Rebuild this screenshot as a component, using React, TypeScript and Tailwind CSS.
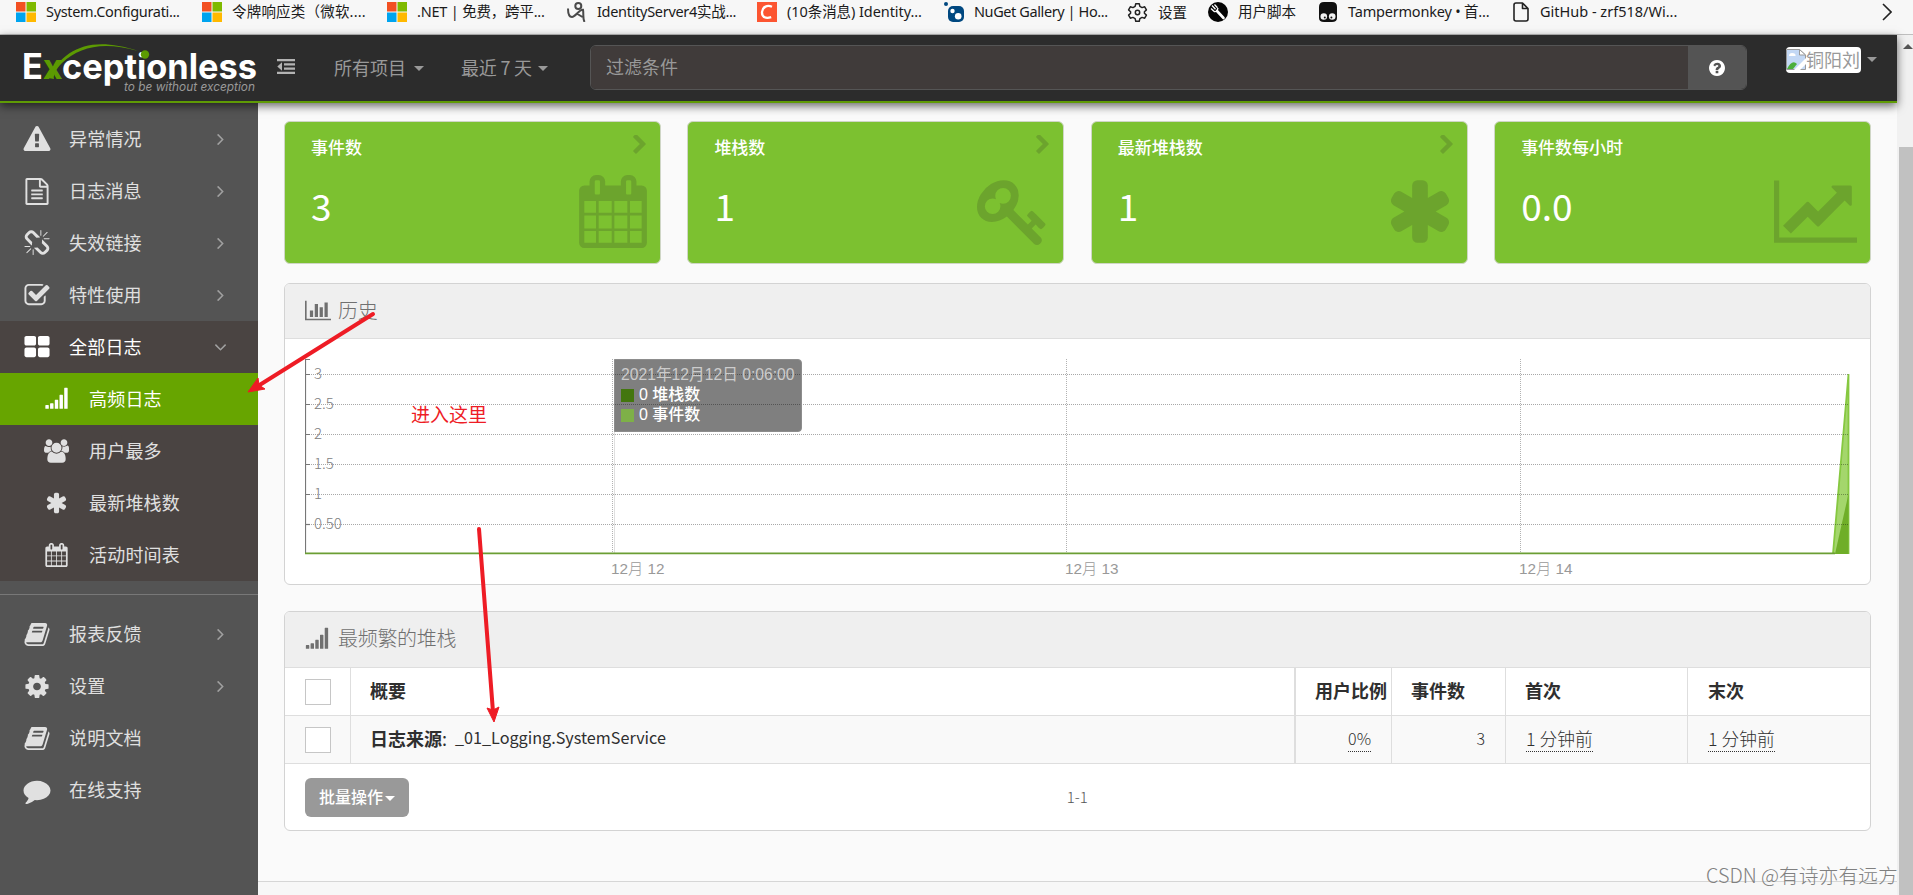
import React from "react";

type IconDef = { box: string; d: string };

const ICONS = {
  warning: {
    box: "0 0 1792 1792",
    d: "M1024 1375v-190q0-14-9.5-23.5t-22.5-9.5h-192q-13 0-22.5 9.5t-9.5 23.5v190q0 14 9.5 23.5t22.5 9.5h192q13 0 22.5-9.5t9.5-23.5zm-2-374l18-459q0-12-10-19-13-11-24-11h-220q-11 0-24 11-10 7-10 21l17 457q0 10 10 16.5t24 6.5h185q14 0 23.5-6.5t10.5-16.5zm-14-934l768 1408q35 63-2 126-17 29-46.5 46t-63.5 17h-1536q-34 0-63.5-17t-46.5-46q-37-63-2-126l768-1408q17-31 47-49t65-18 65 18 47 49z",
  },
  fileText: {
    box: "0 0 1792 1792",
    d: "M1596 380q28 28 48 76t20 88v1152q0 40-28 68t-68 28h-1344q-40 0-68-28t-28-68v-1600q0-40 28-68t68-28h896q40 0 88 20t76 48zm-444-244v376h376q-10-29-22-41l-313-313q-12-12-41-22zm384 1528v-1024h-416q-40 0-68-28t-28-68v-416h-768v1536h1280zm-1024-864q0-14 9-23t23-9h704q14 0 23 9t9 23v64q0 14-9 23t-23 9h-704q-14 0-23-9t-9-23v-64zm736 224q14 0 23 9t9 23v64q0 14-9 23t-23 9h-704q-14 0-23-9t-9-23v-64q0-14 9-23t23-9h704zm0 256q14 0 23 9t9 23v64q0 14-9 23t-23 9h-704q-14 0-23-9t-9-23v-64q0-14 9-23t23-9h704z",
  },
  unlink: {
    box: "0 0 1792 1792",
    d: "M503 1271l-256 256q-10 9-23 9-12 0-23-9-9-10-9-23t9-23l256-256q10-9 23-9t23 9q9 10 9 23t-9 23zm169 41v320q0 14-9 23t-23 9-23-9-9-23v-320q0-14 9-23t23-9 23 9 9 23zm-224-224q0 14-9 23t-23 9h-320q-14 0-23-9t-9-23 9-23 23-9h320q14 0 23 9t9 23zm1264 128q0 120-85 203l-147 146q-83 83-203 83-121 0-204-85l-334-335q-21-21-42-56l239-18 273 274q28 28 68 28.5t68-27.5l147-146q28-28 28-67 0-40-28-68l-274-275 18-239q35 21 56 42l336 336q84 86 84 204zm-617-724l-239 18-273-274q-28-28-68-28-39 0-68 27l-147 146q-28 28-28 67 0 40 28 68l274 274-18 240q-35-21-56-42l-336-336q-84-86-84-204 0-120 85-203l147-146q83-83 203-83 121 0 204 85l334 335q21 21 42 56zm633 84q0 14-9 23t-23 9h-320q-14 0-23-9t-9-23 9-23 23-9h320q14 0 23 9t9 23zm-544-544v320q0 14-9 23t-23 9-23-9-9-23v-320q0-14 9-23t23-9 23 9 9 23zm407 151l-256 256q-11 9-23 9t-23-9q-9-10-9-23t9-23l256-256q10-9 23-9t23 9q9 10 9 23t-9 23z",
  },
  checkSquare: {
    box: "0 0 1792 1792",
    d: "M1472 930v318q0 119-84.5 203.5t-203.5 84.5h-832q-119 0-203.5-84.5t-84.5-203.5v-832q0-119 84.5-203.5t203.5-84.5h832q63 0 117 25 15 7 18 23 3 17-9 29l-49 49q-10 10-23 10-3 0-9-2-23-6-45-6h-832q-66 0-113 47t-47 113v832q0 66 47 113t113 47h832q66 0 113-47t47-113v-254q0-13 9-22l64-64q10-10 23-10 6 0 12 3 20 8 20 29zm231-489l-814 814q-24 24-57 24t-57-24l-430-430q-24-24-24-57t24-57l110-110q24-24 57-24t57 24l263 263 647-647q24-24 57-24t57 24l110 110q24 24 24 57t-24 57z",
  },
  thLarge: {
    box: "0 0 1792 1792",
    d: "M832 1024v384q0 52-38 90t-90 38h-512q-52 0-90-38t-38-90v-384q0-52 38-90t90-38h512q52 0 90 38t38 90zm0-768v384q0 52-38 90t-90 38h-512q-52 0-90-38t-38-90v-384q0-52 38-90t90-38h512q52 0 90 38t38 90zm896 768v384q0 52-38 90t-90 38h-512q-52 0-90-38t-38-90v-384q0-52 38-90t90-38h512q52 0 90 38t38 90zm0-768v384q0 52-38 90t-90 38h-512q-52 0-90-38t-38-90v-384q0-52 38-90t90-38h512q52 0 90 38t38 90z",
  },
  signal: {
    box: "0 0 1792 1792",
    d: "M64 1376q0-32 32-32h192q32 0 32 32v224q0 32-32 32h-192q-32 0-32-32zM416 1248q0-32 32-32h192q32 0 32 32v352q0 32-32 32h-192q-32 0-32-32zM768 992q0-32 32-32h192q32 0 32 32v608q0 32-32 32h-192q-32 0-32-32zM1120 608q0-32 32-32h192q32 0 32 32v992q0 32-32 32h-192q-32 0-32-32zM1472 96q0-32 32-32h192q32 0 32 32v1504q0 32-32 32h-192q-32 0-32-32z",
  },
  users: {
    box: "64 0 1920 1792",
    d: "M657 896q-162 5-265 128h-134q-82 0-138-40.5t-56-118.5q0-353 124-353 6 0 43.5 21t97.5 42.5 119 21.5q67 0 133-23-5 37-5 66 0 159 80 287zm1071 637q0 120-73 189.5t-194 69.5h-874q-121 0-194-69.5t-73-189.5q0-53 3.5-103.5t14-109 26.5-108.5 43-97.5 62-81 85.5-53.5 111.5-20q10 0 43 21.5t73 48 107 48 135 21.5 135-21.5 107-48 73-48 43-21.5q61 0 111.5 20t85.5 53.5 62 81 43 97.5 26.5 108.5 14 109 3.5 103.5zm-1024-1277q0 106-75 181t-181 75-181-75-75-181 75-181 181-75 181 75 75 181zm704 384q0 159-112.5 271.5t-271.5 112.5-271.5-112.5-112.5-271.5 112.5-271.5 271.5-112.5 271.5 112.5 112.5 271.5zm576 225q0 78-56 118.5t-138 40.5h-134q-103-123-265-128 93-134 93-293 0-29-5-66 66 23 133 23 59 0 119-21.5t97.5-42.5 43.5-21q124 0 124 353zm-128-609q0 106-75 181t-181 75-181-75-75-181 75-181 181-75 181 75 75 181z",
  },
  asterisk: {
    box: "64 0 1664 1792",
    d: "M1546 1050q46 26 59.5 77.5t-12.5 97.5l-64 110q-26 46-77.5 59.5t-97.5-12.5l-266-153v307q0 52-38 90t-90 38h-128q-52 0-90-38t-38-90v-307l-266 153q-46 26-97.5 12.5t-77.5-59.5l-64-110q-26-46-12.5-97.5t59.5-77.5l266-154-266-154q-46-26-59.5-77.5t12.5-97.5l64-110q26-46 77.5-59.5t97.5 12.5l266 153v-307q0-52 38-90t90-38h128q52 0 90 38t38 90v307l266-153q46-26 97.5-12.5t77.5 59.5l64 110q26 46 12.5 97.5t-59.5 77.5l-266 154z",
  },
  calendar: {
    box: "64 0 1664 1792",
    d: "M192 1664h288v-288h-288v288zm352 0h320v-288h-320v288zm-352-352h288v-320h-288v320zm352 0h320v-320h-320v320zm-352-384h288v-288h-288v288zm736 736h320v-288h-320v288zm-384-736h320v-288h-320v288zm768 736h288v-288h-288v288zm-384-352h320v-320h-320v320zm-352-864v-288q0-13-9.5-22.5t-22.5-9.5h-64q-13 0-22.5 9.5t-9.5 22.5v288q0 13 9.5 22.5t22.5 9.5h64q13 0 22.5-9.5t9.5-22.5zm736 864h288v-320h-288v320zm-384-384h320v-288h-320v288zm384 0h288v-288h-288v288zm32-480v-288q0-13-9.5-22.5t-22.5-9.5h-64q-13 0-22.5 9.5t-9.5 22.5v288q0 13 9.5 22.5t22.5 9.5h64q13 0 22.5-9.5t9.5-22.5zm384-64v1280q0 52-38 90t-90 38h-1408q-52 0-90-38t-38-90v-1280q0-52 38-90t90-38h128v-96q0-66 47-113t113-47h64q66 0 113 47t47 113v96h384v-96q0-66 47-113t113-47h64q66 0 113 47t47 113v96h128q52 0 90 38t38 90z",
  },
  book: {
    box: "0 0 1792 1792",
    d: "M1703 478q40 57 18 129l-275 906q-19 64-76.5 107.5t-122.5 43.5h-923q-77 0-148.5-53.5t-99.5-131.5q-24-67-2-127 0-4 3-27t4-37q1-8-3-21.5t-3-19.5q2-11 8-21t16.5-23.5 16.5-23.5q23-38 45-91.5t30-91.5q3-10 .5-30t-.5-28q3-11 17-28t17-23q21-36 42-92t25-90q1-9-2.5-32t.5-28q4-13 22-30.5t22-22.5q19-26 42.5-84.5t27.5-96.5q1-8-3-25.5t-2-26.5q2-8 9-18t18-23 17-21q8-12 16.5-30.5t15-35 16-36 19.5-32 26.5-23.5 36-11.5 47.5 5.5l-1 3q38-9 51-9h761q74 0 114 56t18 130l-274 906q-36 119-71.5 153.5t-128.5 34.5h-869q-27 0-38 15-11 16-1 43 24 70 144 70h923q29 0 56-15.5t35-41.5l300-987q7-22 5-57 38 15 59 43zm-1064 2q-4 13 2 22.5t20 9.5h608q13 0 25.5-9.5t16.5-22.5l21-64q4-13-2-22.5t-20-9.5h-608q-13 0-25.5 9.5t-16.5 22.5zm-83 256q-4 13 2 22.5t20 9.5h608q13 0 25.5-9.5t16.5-22.5l21-64q4-13-2-22.5t-20-9.5h-608q-13 0-25.5 9.5t-16.5 22.5z",
  },
  cog: {
    box: "0 0 1792 1792",
    d: "M1152 896q0-106-75-181t-181-75-181 75-75 181 75 181 181 75 181-75 75-181zm512-109v222q0 12-8 23t-20 13l-185 28q-19 54-39 91 35 50 107 138 10 12 10 25t-9 23q-27 37-99 108t-94 71q-12 0-26-9l-138-108q-44 23-91 38-16 136-29 186-7 28-36 28h-222q-14 0-24.5-8.5t-11.5-21.5l-28-184q-49-16-90-37l-141 107q-10 9-25 9-14 0-25-11-126-114-165-168-7-10-7-23 0-12 8-23 15-21 51-66.5t54-70.5q-27-50-41-99l-183-27q-13-2-21-12.5t-8-23.5v-222q0-12 8-23t19-13l186-28q14-46 39-92-40-57-107-138-10-12-10-24 0-10 9-23 26-36 98.5-107.5t94.5-71.5q13 0 26 10l138 107q44-23 91-38 16-136 29-186 7-28 36-28h222q14 0 24.5 8.5t11.5 21.5l28 184q49 16 90 37l142-107q9-9 24-9 13 0 25 10 129 119 165 170 7 8 7 22 0 12-8 23-15 21-51 66.5t-54 70.5q26 50 41 98l183 28q13 2 21 12.5t8 23.5z",
  },
  comment: {
    box: "0 0 1792 1792",
    d: "M1792 896q0 174-120 321.5t-326 233-450 85.5q-70 0-145-8-198 175-460 242-49 14-114 22-17 2-30.5-9t-17.5-29v-1q-3-4-.5-12t2-10 4.5-9.5l6-9 7-8.5 8-9q7-8 31-34.5t34.5-38 31-39.5 32.5-51 27-59 26-76q-157-89-247.5-220t-90.5-281q0-130 71-248.5t191-204.5 286-136.5 348-50.5q244 0 450 85.5t326 233 120 321.5z",
  },
  barChart: {
    box: "0 0 2048 1792",
    d: "M640 896v512h-256v-512h256zm384-512v1024h-256v-1024h256zm1024 1152v128h-2048v-1536h128v1408h1920zm-640-896v768h-256v-768h256zm384-384v1152h-256v-1152h256z",
  },
  lineChart: {
    box: "0 0 2048 1792",
    d: "M2048 1536v128h-2048v-1536h128v1408h1920zm-128-1248v435q0 21-19.5 29.5t-35.5-7.5l-121-121-633 633q-10 10-23 10t-23-10l-233-233-416 416-192-192 585-585q10-10 23-10t23 10l233 233 464-464-121-121q-16-16-7.5-35.5t29.5-19.5h435q14 0 23 9t9 23z",
  },
  key: {
    box: "0 0 1792 1792",
    d: "M832 512q0-80-56-136t-136-56-136 56-56 136q0 42 19 83-41-19-83-19-80 0-136 56t-56 136 56 136 136 56 136-56 56-136q0-42-19-83 41 19 83 19 80 0 136-56t56-136zm851 704q0 17-49 66t-66 49q-9 0-28.5-16t-36.5-33-38.5-40-24.5-26l-96 96 220 220q28 28 28 68 0 42-39 81t-81 39q-40 0-68-28l-671-671q-176 131-365 131-163 0-265.5-102.5t-102.5-265.5q0-160 95-313t248-248 313-95q163 0 265.5 102.5t102.5 265.5q0 189-131 365l355 355 96-96q-3-3-26-24.5t-40-38.5-33-36.5-16-28.5q0-17 49-66t66-49q13 0 23 10 6 6 46 44.5t82 79.5 86.5 86 73 78 28.5 41z",
  },
  chevronRight: {
    box: "346 100 1036 1556",
    d: "M1363 877l-742 742q-19 19-45 19t-45-19l-166-166q-19-19-19-45t19-45l531-531-531-531q-19-19-19-45t19-45l166-166q19-19 45-19t45 19l742 742q19 19 19 45t-19 45z",
  },
  angleRight: {
    box: "588 460 600 1000",
    d: "M1171 960q0 13-10 23l-466 466q-10 10-23 10t-23-10l-50-50q-10-10-10-23t10-23l393-393-393-393q-10-10-10-23t10-23l50-50q10-10 23-10t23 10l466 466q10 10 10 23z",
  },
  question: {
    box: "128 128 1536 1536",
    d: "M1024 1376v-192q0-14-9-23t-23-9h-192q-14 0-23 9t-9 23v192q0 14 9 23t23 9h192q14 0 23-9t9-23zm256-672q0-88-55.5-163t-138.5-116-170-41q-243 0-371 213-15 24 8 42l132 100q7 6 19 6 16 0 25-12 53-68 86-92 34-24 86-24 48 0 85.5 26t37.5 59q0 38-20 61t-68 45q-63 28-115.5 86.5t-52.5 125.5v36q0 14 9 23t23 9h192q14 0 23-9t9-23q0-19 21.5-49.5t54.5-49.5q32-18 49-28.5t46-35 44.5-48 28-60.5 12.5-81zm384 192q0 209-103 385.5t-279.5 279.5-385.5 103-385.5-103-279.5-279.5-103-385.5 103-385.5 279.5-279.5 385.5-103 385.5 103 279.5 279.5 103 385.5z",
  },
} satisfies Record<string, IconDef>;

type IconName = keyof typeof ICONS;

function Icon({ name, className }: { name: IconName; className: string }) {
  return (
    <svg viewBox={ICONS[name].box} className={`shrink-0 ${className}`} fill="currentColor" aria-hidden="true">
      <path d={ICONS[name].d} />
    </svg>
  );
}

function Caret({ className = "" }: { className?: string }) {
  return (
    <span
      className={`inline-block shrink-0 border-x-[5px] border-t-[5px] border-x-transparent border-t-current ${className}`}
    />
  );
}

/* ---------- bookmarks bar ---------- */

function Microsoft() {
  return (
    <svg viewBox="0 0 20 20" className="size-5">
      <path fill="#f25022" d="M0 0h9.5v9.5H0z" />
      <path fill="#7fba00" d="M10.5 0H20v9.5h-9.5z" />
      <path fill="#00a4ef" d="M0 10.5h9.5V20H0z" />
      <path fill="#ffb900" d="M10.5 10.5H20V20h-9.5z" />
    </svg>
  );
}

function Figure() {
  return (
    <svg viewBox="0 0 20 20" className="size-5" fill="none" stroke="#4a4a4a" strokeWidth="2">
      <circle cx="11.3" cy="4" r="3" />
      <path d="M1 6.5c0 5 1.500 8.500 4 8.500 3.500 0 7-7.500 11-7.200.8 4-.5 8 1.500 12.200M10.500 12l5 3" />
    </svg>
  );
}

function Csdn() {
  return (
    <span className="flex size-5 items-center justify-center bg-[#fc5531]">
      <svg viewBox="0 0 20 20" className="size-5" fill="none" stroke="#fff" strokeWidth="2.300">
        <path d="M15 4.800C10.500 2.800 5.500 4.500 5 10c-.3 5.500 4 7 9.200 5.200" />
      </svg>
    </span>
  );
}

function NuGet() {
  return (
    <svg viewBox="0 0 20 20" className="size-5">
      <circle cx="2" cy="2" r="2" fill="#004880" />
      <rect x="4" y="4" width="16" height="16" rx="5" fill="#004880" />
      <circle cx="8.500" cy="9" r="2.200" fill="#fff" />
      <circle cx="14.200" cy="14.200" r="3.300" fill="#fff" />
    </svg>
  );
}

function Gear() {
  return (
    <svg viewBox="0 0 24 24" className="size-[21px]" fill="none" stroke="#222" strokeWidth="1.700" strokeLinejoin="round">
      <path d="M10 2h4l.7 3 2.500 1.400 3-.9 2 3.500-2.300 2.100v1.800l2.300 2.100-2 3.500-3-.9-2.500 1.400L14 22h-4l-.7-3-2.500-1.400-3 .9-2-3.500 2.300-2.100v-1.800L1.800 9l2-3.500 3 .9L9.300 5z" />
      <circle cx="12" cy="12" r="2.500" />
    </svg>
  );
}

function Scripts() {
  return (
    <svg viewBox="0 0 20 20" className="size-5">
      <circle cx="10" cy="10" r="10" fill="#050505" />
      <path d="M9 9l6.500 7" stroke="#fff" strokeWidth="2.600" strokeLinecap="round" />
      <path d="M4 3.500l3.500 3.800M6.500 2.500l3 3.300M3 6.500l3.500 3.300M6 9.500q3 1 4-3.500" stroke="#fff" strokeWidth="1.300" fill="none" />
    </svg>
  );
}

function Tampermonkey() {
  return (
    <svg viewBox="0 0 20 20" className="size-5">
      <path d="M6 0h8q5 0 5 5v11q0 4-5 4H6q-5 0-5-4V5q0-5 5-5z" fill="#111" />
      <circle cx="5.800" cy="14.500" r="3.300" fill="#f2f2f2" />
      <circle cx="14.200" cy="14.500" r="3.300" fill="#f2f2f2" />
      <circle cx="6.800" cy="15.500" r="1" fill="#111" />
      <circle cx="13.400" cy="15.500" r="1" fill="#111" />
    </svg>
  );
}

function Page() {
  return (
    <svg viewBox="0 0 16 20" className="h-5 w-4" fill="none" stroke="#222" strokeWidth="1.600" strokeLinejoin="round">
      <path d="M3 1h6.500L15 6.500V17q0 2-2 2H3q-2 0-2-2V3q0-2 2-2zM9.500 1v5.500H15" />
    </svg>
  );
}

function Bookmark({ icon, label, className }: { icon: React.ReactNode; label: string; className: string }) {
  return (
    <div className={`flex shrink-0 items-center gap-[10px] whitespace-nowrap ${className}`}>
      {icon}
      <span className="-mt-[2px]">{label}</span>
    </div>
  );
}

function Bookmarks() {
  return (
    <div className="flex h-[35px] items-start overflow-hidden border-b border-[#bfbfbf] bg-[#f7f7f7] pt-[2px] pl-4 font-['Noto_Sans','Noto_Sans_CJK_SC',sans-serif] text-[14.500px] leading-5 text-[#1b1b1b]">
      <Bookmark icon={<Microsoft />} label="System.Configurati..." className="w-[186px] tracking-[-0.32px]" />
      <Bookmark icon={<Microsoft />} label="令牌响应类（微软...." className="w-[185px] tracking-[0.2px]" />
      <Bookmark icon={<Microsoft />} label=".NET | 免费，跨平..." className="w-[180px] tracking-[-0.2px]" />
      <Bookmark icon={<Figure />} label="IdentityServer4实战..." className="w-[190px] tracking-[-0.3px]" />
      <Bookmark icon={<Csdn />} label="(10条消息) Identity..." className="w-[187px] tracking-[-0.07px]" />
      <Bookmark icon={<NuGet />} label="NuGet Gallery | Ho..." className="w-[183px] tracking-[-0.4px]" />
      <Bookmark icon={<Gear />} label="设置" className="w-[81px]" />
      <Bookmark icon={<Scripts />} label="用户脚本" className="w-[110px]" />
      <Bookmark icon={<Tampermonkey />} label="Tampermonkey • 首..." className="w-[195px] tracking-[-0.2px]" />
      <Bookmark icon={<Page />} label="GitHub - zrf518/Wi..." className="w-[200px] gap-[11px] tracking-[0px]" />
      <svg viewBox="0 0 10 18" className="mt-[1px] mr-[21px] ml-auto h-[18px] w-[10px]" fill="none" stroke="#222" strokeWidth="1.600">
        <path d="M1 1l8 8-8 8" />
      </svg>
    </div>
  );
}

/* ---------- top navigation ---------- */

function Logo() {
  return (
    <svg viewBox="0 0 240 56" className="h-14 w-60 shrink-0 overflow-visible">
      <text
        x="-2"
        y="38"
        fill="#fff"
        fontFamily="Inter, sans-serif"
        fontWeight="700"
        fontSize="35"
        textLength="235"
        lengthAdjust="spacingAndGlyphs"
      >
        E<tspan fill="#5c9a02">x</tspan>ceptionless
      </text>
      <path d="M24 37C40 8 66-6 114 10 78 0 56 6 38 22 32 28 29 34 30 38z" fill="#5c9a02" />
      <circle cx="121" cy="13.500" r="4.200" fill="#5c9a02" />
      <text
        x="100"
        y="50"
        fill="#999"
        fontSize="12.500"
        fontStyle="italic"
        fontFamily="Inter, sans-serif"
        textLength="131"
        lengthAdjust="spacingAndGlyphs"
      >
        to be without exception
      </text>
    </svg>
  );
}

function TopBar() {
  return (
    <header className="relative z-10 flex h-[68px] items-start border-b-2 border-[#5f9b05] bg-[#2c2c2c] pl-6 text-lg text-[#999] shadow-[0_3px_9px_rgba(0,0,0,0.6)]">
      <div className="mt-[6px]">
        <Logo />
      </div>
      <svg viewBox="0 0 18 15" className="mt-6 ml-[13px] h-[15px] w-[18px] shrink-0" fill="#b3b3b3">
        <path d="M0 0h18v2.300H0zM7 4.200h11v2.300H7zM7 8.500h11v2.300H7zM0 12.700h18V15H0zM5 3.300v8.400L.3 7.500z" />
      </svg>
      <div className="flex h-[64px] w-[128px] shrink-0 items-center gap-2 pl-[39px] whitespace-nowrap">
        <span>所有项目</span>
        <Caret className="mt-[3px]" />
      </div>
      <div className="ml-[38px] flex h-[64px] w-[129px] shrink-0 items-center gap-[6px] whitespace-nowrap">
        <span className="tracking-[-0.2px]">最近 7 天</span>
        <Caret className="mt-[3px]" />
      </div>
      <div className="mt-[10px] flex h-[45px] w-[1157px] shrink-0 overflow-hidden rounded-md border border-[#555]">
        <div className="flex flex-1 items-center bg-[#403b3a] pb-[3px] pl-[15px] text-[#999]">过滤条件</div>
        <div className="flex w-[58px] items-center justify-center bg-[#545454] text-white">
          <Icon name="question" className="size-4" />
        </div>
      </div>
      <div className="mt-3 ml-[39px] flex h-[26px] shrink-0 items-center gap-[6px]">
        <div className="flex h-[26px] w-[75px] items-center overflow-hidden rounded bg-white whitespace-nowrap">
          <svg viewBox="0 0 20 24" className="h-6 w-5 shrink-0">
            <path d="M.5 1.500h13l6 5.500v14.500H.5z" fill="#c3d8f5" stroke="#9a9a9a" />
            <path d="M13.500 1.500V7h6z" fill="#fff" stroke="#9a9a9a" />
            <path d="M3 8q0-3 3-3 4 0 3.500 3z" fill="#fff" />
            <path d="M1 21q5-10 10-5l-4 5z" fill="#4caf3c" />
            <path d="M8 22L20 10v6l-6 6z" fill="#fff" />
          </svg>
          <span className="-mt-[2px]">铜阳刘</span>
        </div>
        <Caret className="-mt-[2px]" />
      </div>
    </header>
  );
}

/* ---------- sidebar ---------- */

function NavItem({ icon, label, arrow = true }: { icon: IconName; label: string; arrow?: boolean }) {
  return (
    <div className="flex h-[52px] items-center pr-[34px] pl-[23px]">
      <Icon name={icon} className="h-[27px] w-7" />
      <span className="-mt-[3px] ml-[18px] flex-1 tracking-[0.2px]">{label}</span>
      {arrow && <Icon name="angleRight" className="h-[11px] w-[7px] text-[#a0a0a0]" />}
    </div>
  );
}

function SubItem({ icon, label, active = false }: { icon: IconName; label: string; active?: boolean }) {
  return (
    <div className={`flex h-[52px] items-center pl-[44px] ${active ? "bg-[#67a500] text-white" : ""}`}>
      <Icon name={icon} className="h-6 w-[25px]" />
      <span className="-mt-[3px] ml-[20px] tracking-[0.2px]">{label}</span>
    </div>
  );
}

function Sidebar() {
  return (
    <nav className="w-[258px] shrink-0 bg-[#545454] pt-[10px] text-lg text-[#e0e0e0]">
      <NavItem icon="warning" label="异常情况" />
      <NavItem icon="fileText" label="日志消息" />
      <NavItem icon="unlink" label="失效链接" />
      <NavItem icon="checkSquare" label="特性使用" />
      <div className="bg-[#4a4442]">
        <div className="flex h-[52px] items-center pr-[34px] pl-[23px] text-white">
          <Icon name="thLarge" className="h-[27px] w-7" />
          <span className="-mt-[3px] ml-[18px] flex-1 tracking-[0.2px]">全部日志</span>
          <Icon name="angleRight" className="h-[11px] w-[7px] rotate-90 text-[#a0a0a0]" />
        </div>
        <SubItem icon="signal" label="高频日志" active />
        <SubItem icon="users" label="用户最多" />
        <SubItem icon="asterisk" label="最新堆栈数" />
        <SubItem icon="calendar" label="活动时间表" />
      </div>
      <div className="mt-[13px] mb-[13px] h-px bg-[#787878]" />
      <NavItem icon="book" label="报表反馈" />
      <NavItem icon="cog" label="设置" />
      <NavItem icon="book" label="说明文档" arrow={false} />
      <NavItem icon="comment" label="在线支持" arrow={false} />
    </nav>
  );
}

/* ---------- dashboard ---------- */

function StatCard({
  title,
  value,
  icon,
  iconClass,
  link = true,
}: {
  title: string;
  value: string;
  icon: IconName;
  iconClass: string;
  link?: boolean;
}) {
  return (
    <div className="flex h-[143px] justify-between rounded-md border border-[#cfd6c6] bg-[#7cc130] pr-[13px] pl-[26px]">
      <div className="flex flex-col pt-3 text-white">
        <span className="text-[17px] leading-[26px] font-medium">{title}</span>
        <span className="mt-[18px] text-[37px] leading-[54px]">{value}</span>
      </div>
      <div className="flex flex-col items-end text-[#6ca42d]">
        <div className="flex h-[53px] pt-[13px] pr-px">
          {link && <Icon name="chevronRight" className="h-[19px] w-[13px]" />}
        </div>
        <Icon name={icon} className={iconClass} />
      </div>
    </div>
  );
}

const GRID_LINES = [
  { y: 15, label: "3" },
  { y: 45, label: "2.5" },
  { y: 75, label: "2" },
  { y: 105, label: "1.5" },
  { y: 135, label: "1" },
  { y: 165, label: "0.50" },
];

const DAYS = [
  { x: 307.5, label: "12月 12" },
  { x: 761.5, label: "12月 13" },
  { x: 1215.5, label: "12月 14" },
];

function Chart() {
  return (
    <div className="relative h-[245px] px-5 pt-5">
      <svg
        viewBox="0 0 1545 220"
        className="block h-[220px] w-[1545px]"
        fontFamily="'Liberation Sans', 'Noto Sans CJK SC', sans-serif"
      >
        <path d="M0.500 195V.5M0 .5h5" stroke="#777" fill="none" strokeWidth="1.200" />
        <path d="M0 194.500h1528L1543.500 15v180z" fill="#a4d66c" />
        <path d="M1528 194.500L1543.500 15v180" fill="none" stroke="#86c840" strokeWidth="1.800" />
        <path d="M1530 195L1543.500 135v60z" fill="#6fae28" />
        {GRID_LINES.map((g) => (
          <g key={g.label}>
            <path d={`M0 ${g.y + 0.5}H1543`} stroke="#000" strokeOpacity="0.34" strokeDasharray="1 1" />
            <path d={`M0 ${g.y + 0.5}h5`} stroke="#777" strokeWidth="1.200" />
            <text x="9" y={g.y + 5} fontSize="15" fill="#808080" className="font-light" fontFamily="'Noto Sans CJK SC', sans-serif">
              {g.label}
            </text>
          </g>
        ))}
        {DAYS.map((d) => (
          <g key={d.label}>
            <path d={`M${d.x} 0V194`} stroke="#000" strokeOpacity="0.3" strokeDasharray="1 1" />
            <text x={d.x - 1.5} y="215" fontSize="15.300" fill="#999" className="font-light">
              {d.label}
            </text>
          </g>
        ))}
        <path d="M309.500 0V194" stroke="#000" strokeOpacity="0.12" />
        <path d="M0 194.300H1530" stroke="#6b9e33" strokeWidth="1.800" />
      </svg>
      <div className="absolute top-5 left-[329px] h-[73px] w-[188px] rounded-r border border-[#8d8d8d] bg-black/50 pt-[5px] pl-[6px] font-['Liberation_Sans','Noto_Sans_CJK_SC',sans-serif] text-[16px] leading-5 whitespace-nowrap text-white">
        <div className="text-[15.700px] text-[#ccc]">2021年12月12日 0:06:00</div>
        <div className="mt-[1px] flex items-center gap-[5px] font-medium">
          <span className="size-[13px] bg-[#43760e]" />
          <span className="-mt-px">0 堆栈数</span>
        </div>
        <div className="flex items-center gap-[5px] font-medium">
          <span className="size-[13px] bg-[#7eb048]" />
          <span>0 事件数</span>
        </div>
      </div>
    </div>
  );
}

function Panel({
  icon,
  title,
  headerClass,
  children,
}: {
  icon: React.ReactNode;
  title: string;
  headerClass: string;
  children: React.ReactNode;
}) {
  return (
    <section className="overflow-hidden rounded-md border border-[#d3d3d3] bg-white">
      <div className={`flex items-center border-b border-[#dedede] bg-[#efefef] pb-[2px] pl-5 text-xl text-[#707070] ${headerClass}`}>
        <span className="w-[33px]">{icon}</span>
        <span className="-mt-px font-light tracking-[-0.3px]">{title}</span>
      </div>
      {children}
    </section>
  );
}

function Checkbox() {
  return <span className="block size-[26px] border border-[#c6c6c6] bg-white" />;
}

function StackTable() {
  return (
    <div className="text-lg text-[#2f2f2f]">
      <div className="grid h-12 grid-cols-[66px_945px_96px_114px_182px_1fr] border-b border-[#dedede] font-bold whitespace-nowrap">
        <div className="flex items-center border-r border-[#dedede] pl-5">
          <Checkbox />
        </div>
        <div className="flex items-center border-r-2 border-[#dedede] pb-[3px] pl-[19px]">概要</div>
        <div className="flex items-center border-r border-[#dedede] pb-[3px] pl-[19px]">用户比例</div>
        <div className="flex items-center border-r border-[#dedede] pb-[3px] pl-[19px]">事件数</div>
        <div className="flex items-center border-r border-[#dedede] pb-[3px] pl-[19px]">首次</div>
        <div className="flex items-center pb-[3px] pl-[20px]">末次</div>
      </div>
      <div className="grid h-12 grid-cols-[66px_945px_96px_114px_182px_1fr] border-b border-[#dedede] bg-[#f9f9f9] whitespace-nowrap">
        <div className="flex items-center border-r border-[#dedede] pl-5">
          <Checkbox />
        </div>
        <div className="flex items-center border-r-2 border-[#dedede] pb-[3px] pl-[19px]">
          <b>日志来源</b>:<span className="ml-2 text-[16.200px]">_01_Logging.SystemService</span>
        </div>
        <div className="flex items-center justify-end border-r border-[#dedede] pr-5 pb-[2px] text-[16px] font-light">
          <span className="border-b border-dotted border-[#333] leading-[26px]">0%</span>
        </div>
        <div className="flex items-center justify-end border-r border-[#dedede] pr-5 pb-[2px] text-[16px] font-light">3</div>
        <div className="flex items-center border-r border-[#dedede] pb-[2px] pl-5 text-[17.800px] font-light">
          <span className="border-b border-dotted border-[#333] leading-[26px]">1 分钟前</span>
        </div>
        <div className="flex items-center pb-[2px] pl-5 text-[17.800px] font-light">
          <span className="border-b border-dotted border-[#333] leading-[26px]">1 分钟前</span>
        </div>
      </div>
      <div className="grid h-[66px] grid-cols-3 items-center pl-5">
        <button className="flex h-[39px] w-[104px] items-center justify-center gap-[2px] rounded-md bg-[#999] text-base font-medium text-white">
          <span className="-mt-[2px]">批量操作</span>
          <Caret className="mt-[2px]" />
        </button>
        <span className="pl-[240px] text-[15px] font-light whitespace-nowrap text-[#555]">1-1</span>
      </div>
    </div>
  );
}

function Annotations() {
  return (
    <div className="pointer-events-none absolute inset-0 z-20">
      <svg viewBox="0 0 1913 895" className="absolute inset-0 h-[895px] w-[1913px]" stroke="#ee1c25" fill="#ee1c25">
        <path d="M373 314L258 386" strokeWidth="4" strokeLinecap="round" />
        <path d="M248 392l10-14 1 7 6 4z" strokeWidth="1" />
        <path d="M479 529L493 712" strokeWidth="4" strokeLinecap="round" />
        <path d="M494 722l-7-14 6 2 6-3z" strokeWidth="1" />
      </svg>
      <span className="absolute top-[400px] left-[411px] text-[19px] leading-7 text-[#ee1c25]">进入这里</span>
      <span className="absolute top-[861px] left-[1706px] text-[19.800px] leading-7 font-light whitespace-nowrap text-[#808080]">
        CSDN @有诗亦有远方
      </span>
    </div>
  );
}

export default function App() {
  return (
    <div className="relative flex h-[895px] w-[1913px] flex-col overflow-hidden bg-[#fafafa] font-['Noto_Sans_CJK_SC','Noto_Sans',sans-serif]">
      <Bookmarks />
      <div className="flex min-h-0 flex-1">
        <div className="flex w-[1897px] flex-col">
          <TopBar />
          <div className="flex min-h-0 flex-1">
            <Sidebar />
            <main className="flex min-w-0 flex-1 flex-col">
              <div className="flex flex-col pt-[18px] pr-[26px] pl-[26px]">
                <div className="grid grid-cols-4 gap-[26.500px]">
                  <StatCard title="事件数" value="3" icon="calendar" iconClass="h-[73px] w-[68px]" />
                  <StatCard title="堆栈数" value="1" icon="key" iconClass="h-[73px] w-[73px]" />
                  <StatCard title="最新堆栈数" value="1" icon="asterisk" iconClass="h-[73px] w-[68px]" />
                  <StatCard title="事件数每小时" value="0.0" icon="lineChart" iconClass="h-[73px] w-[83px]" link={false} />
                </div>
                <div className="mt-[19px]">
                  <Panel icon={<Icon name="barChart" className="h-[23px] w-[26px]" />} title="历史" headerClass="h-[55px]">
                    <Chart />
                  </Panel>
                </div>
                <div className="mt-[26px]">
                  <Panel icon={<Icon name="signal" className="h-6 w-6" />} title="最频繁的堆栈" headerClass="h-[56px]">
                    <StackTable />
                  </Panel>
                </div>
              </div>
              <div className="mt-[50px] flex-1 border-t border-[#d6d6d6] bg-[#f7f7f7]" />
            </main>
          </div>
        </div>
        <div className="flex flex-1 flex-col bg-[#f1f1f1] pl-[2px]">
          <div className="flex h-[112px] justify-center pt-[9px] pl-1">
            <span className="h-0 border-x-[5px] border-b-[5px] border-x-transparent border-b-[#555]" />
          </div>
          <div className="flex-1 bg-[#c1c1c1]" />
        </div>
      </div>
      <Annotations />
    </div>
  );
}
